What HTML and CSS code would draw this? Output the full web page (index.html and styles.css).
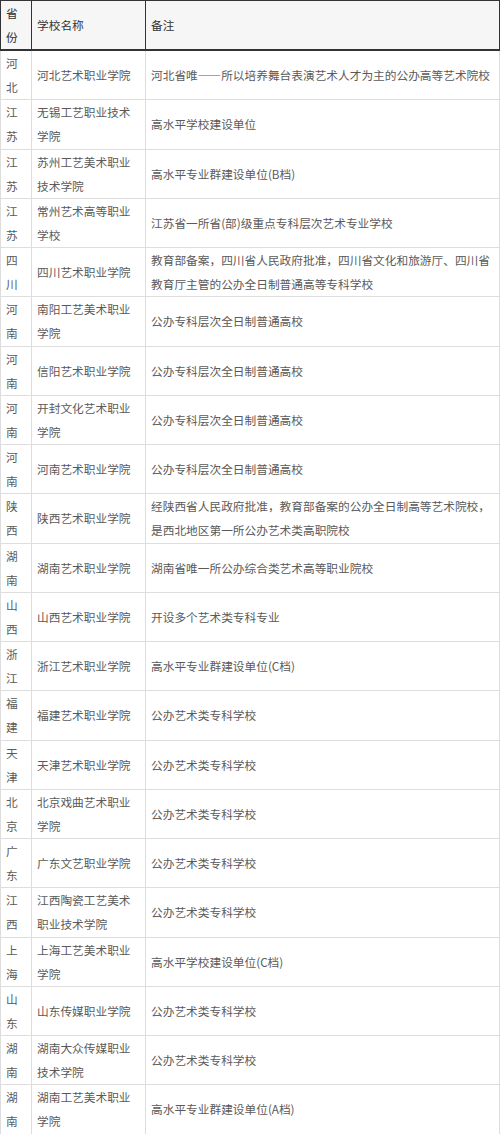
FILE: index.html
```html
<!DOCTYPE html>
<html lang="zh">
<head>
<meta charset="utf-8">
<link rel="stylesheet" href="styles.css">
</head>
<body>
<table class="schools">
<colgroup><col class="c-prov"><col class="c-name"><col class="c-note"></colgroup>
<thead>
<tr><th>省份</th><th>学校名称</th><th>备注</th></tr>
</thead>
<tbody>
<tr><td>河北</td><td>河北艺术职业学院</td><td>河北省唯——所以培养舞台表演艺术人才为主的公办高等艺术院校</td></tr>
<tr><td>江苏</td><td>无锡工艺职业技术学院</td><td>高水平学校建设单位</td></tr>
<tr><td>江苏</td><td>苏州工艺美术职业技术学院</td><td>高水平专业群建设单位(B档)</td></tr>
<tr><td>江苏</td><td>常州艺术高等职业学校</td><td>江苏省一所省(部)级重点专科层次艺术专业学校</td></tr>
<tr><td>四川</td><td>四川艺术职业学院</td><td>教育部备案，四川省人民政府批准，四川省文化和旅游厅、四川省教育厅主管的公办全日制普通高等专科学校</td></tr>
<tr><td>河南</td><td>南阳工艺美术职业学院</td><td>公办专科层次全日制普通高校</td></tr>
<tr><td>河南</td><td>信阳艺术职业学院</td><td>公办专科层次全日制普通高校</td></tr>
<tr><td>河南</td><td>开封文化艺术职业学院</td><td>公办专科层次全日制普通高校</td></tr>
<tr><td>河南</td><td>河南艺术职业学院</td><td>公办专科层次全日制普通高校</td></tr>
<tr><td>陕西</td><td>陕西艺术职业学院</td><td>经陕西省人民政府批准，教育部备案的公办全日制高等艺术院校，是西北地区第一所公办艺术类高职院校</td></tr>
<tr><td>湖南</td><td>湖南艺术职业学院</td><td>湖南省唯一所公办综合类艺术高等职业院校</td></tr>
<tr><td>山西</td><td>山西艺术职业学院</td><td>开设多个艺术类专科专业</td></tr>
<tr><td>浙江</td><td>浙江艺术职业学院</td><td>高水平专业群建设单位(C档)</td></tr>
<tr><td>福建</td><td>福建艺术职业学院</td><td>公办艺术类专科学校</td></tr>
<tr><td>天津</td><td>天津艺术职业学院</td><td>公办艺术类专科学校</td></tr>
<tr><td>北京</td><td>北京戏曲艺术职业学院</td><td>公办艺术类专科学校</td></tr>
<tr><td>广东</td><td>广东文艺职业学院</td><td>公办艺术类专科学校</td></tr>
<tr><td>江西</td><td>江西陶瓷工艺美术职业技术学院</td><td>公办艺术类专科学校</td></tr>
<tr><td>上海</td><td>上海工艺美术职业学院</td><td>高水平学校建设单位(C档)</td></tr>
<tr><td>山东</td><td>山东传媒职业学院</td><td>公办艺术类专科学校</td></tr>
<tr><td>湖南</td><td>湖南大众传媒职业技术学院</td><td>公办艺术类专科学校</td></tr>
<tr><td>湖南</td><td>湖南工艺美术职业学院</td><td>高水平专业群建设单位(A档)</td></tr>
</tbody>
</table>
</body>
</html>
```

FILE: styles.css
```css
html, body {
  margin: 0;
  padding: 0;
  background: #ffffff;
}

.schools {
  border-collapse: collapse;
  table-layout: fixed;
  width: 499px;
  font-family: "Noto Sans CJK SC", "Noto Sans", sans-serif;
  font-size: 11.7px;
  line-height: 24px;
  color: #5a5a5a;
}

.c-prov { width: 31px; }
.c-name { width: 114px; }
.c-note { width: 354px; }

.schools th,
.schools td {
  padding: 0 5px;
  text-align: left;
  vertical-align: middle;
  word-break: break-all;
}

.schools th {
  height: 48px;
  font-weight: normal;
  color: #333333;
  background: #f6f6f6;
  border: 1px solid #333333;
  border-bottom-width: 2px;
}

.schools td {
  height: 48.25px;
  border: 1px solid #dddddd;
}

.schools tbody tr:first-child td {
  border-top: none;
}
```
